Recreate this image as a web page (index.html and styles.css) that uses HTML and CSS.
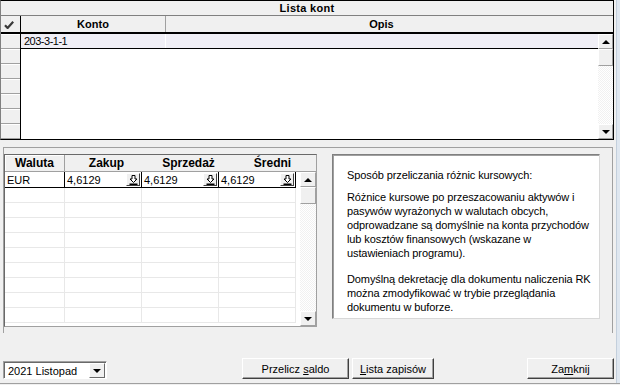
FILE: index.html
```html
<!DOCTYPE html>
<html lang="pl">
<head>
  <meta charset="UTF-8">
  <meta name="viewport" content="width=device-width, initial-scale=1.0">
  <title>Różnice kursowe</title>
  <link rel="stylesheet" href="styles.css">
</head>
<body>
  <div class="app">
    <div class="main">

      <div class="accounts">
        <div class="accounts-title">Lista kont</div>
        <div class="accounts-body">
          <div class="indicator">
            <div class="ind-head">
              <svg width="10" height="8" viewBox="0 0 10 8"><path d="M1 4.2 L3.6 7 L9.2 0.8" fill="none" stroke="#3a3a3a" stroke-width="2.2"/></svg>
            </div>
            <div class="ind-cell"></div>
            <div class="ind-cell"></div>
            <div class="ind-cell"></div>
            <div class="ind-cell"></div>
            <div class="ind-cell"></div>
            <div class="ind-cell"></div>
            <div class="ind-cell"></div>
          </div>
          <div class="acc-grid">
            <div class="acc-head">
              <div class="acc-konto">Konto</div>
              <div class="acc-opis">Opis</div>
              <div class="acc-corner"></div>
            </div>
            <div class="acc-rows">
              <div class="acc-data">
                <div class="acc-row selected">
                  <div class="acc-konto">203-3-1-1</div>
                  <div class="acc-opis"></div>
                </div>
              </div>
              <div class="vscroll">
                <div class="sb-btn"><span class="arrow-up"></span></div>
                <div class="sb-thumb"></div>
                <div class="sb-btn down"><span class="arrow-down"></span></div>
              </div>
            </div>
          </div>
        </div>
      </div>

      <div class="middle">
        <div class="cur-grid">
          <div class="cur-head">
            <div class="ch waluta">Waluta</div>
            <div class="ch kurs zakup">Zakup</div>
            <div class="ch kurs sprzedaz">Sprzedaż</div>
            <div class="ch last">Średni</div>
          </div>
          <div class="cur-body">
            <div class="cur-cols">
              <div class="cur-row edit">
                <div class="cc waluta">EUR</div>
                <div class="cc kurs">4,6129<span class="pick"><svg width="9" height="10" viewBox="0 0 9 10"><path d="M3 0.5 H6 V4 H8 L4.5 7.5 L1 4 H3 Z" fill="#fff" stroke="#000"/><rect x="0.5" y="8.5" width="8" height="1.5" fill="#000"/></svg></span></div>
                <div class="cc kurs">4,6129<span class="pick"><svg width="9" height="10" viewBox="0 0 9 10"><path d="M3 0.5 H6 V4 H8 L4.5 7.5 L1 4 H3 Z" fill="#fff" stroke="#000"/><rect x="0.5" y="8.5" width="8" height="1.5" fill="#000"/></svg></span></div>
                <div class="cc kurs">4,6129<span class="pick"><svg width="9" height="10" viewBox="0 0 9 10"><path d="M3 0.5 H6 V4 H8 L4.5 7.5 L1 4 H3 Z" fill="#fff" stroke="#000"/><rect x="0.5" y="8.5" width="8" height="1.5" fill="#000"/></svg></span></div>
              </div>
              <div class="cur-row"><div class="cc waluta"></div><div class="cc kurs"></div><div class="cc kurs"></div><div class="cc kurs"></div></div>
              <div class="cur-row"><div class="cc waluta"></div><div class="cc kurs"></div><div class="cc kurs"></div><div class="cc kurs"></div></div>
              <div class="cur-row"><div class="cc waluta"></div><div class="cc kurs"></div><div class="cc kurs"></div><div class="cc kurs"></div></div>
              <div class="cur-row"><div class="cc waluta"></div><div class="cc kurs"></div><div class="cc kurs"></div><div class="cc kurs"></div></div>
              <div class="cur-row"><div class="cc waluta"></div><div class="cc kurs"></div><div class="cc kurs"></div><div class="cc kurs"></div></div>
              <div class="cur-row"><div class="cc waluta"></div><div class="cc kurs"></div><div class="cc kurs"></div><div class="cc kurs"></div></div>
              <div class="cur-row"><div class="cc waluta"></div><div class="cc kurs"></div><div class="cc kurs"></div><div class="cc kurs"></div></div>
              <div class="cur-row"><div class="cc waluta"></div><div class="cc kurs"></div><div class="cc kurs"></div><div class="cc kurs"></div></div>
              <div class="cur-row"><div class="cc waluta"></div><div class="cc kurs"></div><div class="cc kurs"></div><div class="cc kurs"></div></div>
            </div>
            <div class="cur-gap"></div>
            <div class="vscroll wide">
              <div class="sb-btn"><span class="arrow-up"></span></div>
              <div class="sb-thumb"></div>
              <div class="sb-btn down"><span class="arrow-down"></span></div>
            </div>
          </div>
        </div>

        <div class="info">
          <p>Sposób przeliczania różnic kursowych:</p>
          <p>Różnice kursowe po przeszacowaniu aktywów i<br>
            pasywów wyrażonych w walutach obcych,<br>
            odprowadzane są domyślnie na konta przychodów<br>
            lub kosztów finansowych (wskazane w<br>
            ustawieniach programu).</p>
          <p class="last">Domyślną dekretację dla dokumentu naliczenia RK<br>
            można zmodyfikować w trybie przeglądania<br>
            dokumentu w buforze.</p>
        </div>
      </div>

      <div class="toolbar">
        <div class="combo">
          <span class="combo-text">2021 Listopad</span>
          <span class="combo-btn"><span class="arrow-down"></span></span>
        </div>
        <button class="btn przelicz">Przelicz <u>s</u>aldo</button>
        <button class="btn lista"><u>L</u>ista zapisów</button>
        <button class="btn zamknij">Za<u>m</u>knij</button>
      </div>

    </div>
    <div class="edge"></div>
  </div>
</body>
</html>
```

FILE: styles.css
```css
* {
  box-sizing: border-box;
}

body {
  margin: 0;
  width: 620px;
  height: 385px;
  overflow: hidden;
  background: #f0f0f0;
  font-family: 'Liberation Sans', Arial, sans-serif;
  font-size: 11px;
  color: #000;
}

.app {
  display: flex;
  height: 384px;
  border-bottom: 1px solid #a0a0a0;
}

.main {
  width: 614px;
  display: flex;
  flex-direction: column;
}

.edge {
  width: 4px;
  margin-left: 2px;
  border-left: 1px solid #c3cfdc;
  background: #dfe7f0;
}

/* --- Lista kont --- */

.accounts {
  width: 614px;
  height: 140px;
  border-top: 1px solid #000;
  border-left: 1px solid #808080;
  border-right: 1px solid #000;
  border-bottom: 1px solid #000;
}

.accounts-title {
  height: 15px;
  line-height: 14px;
  border-bottom: 1px solid #808080;
  text-align: center;
  font-weight: bold;
  letter-spacing: 0.3px;
}

.accounts-body {
  display: flex;
  height: 123px;
}

.indicator {
  width: 20px;
  border-right: 1px solid #000;
}

.ind-head {
  height: 18px;
  border-bottom: 2px solid #000;
  display: flex;
  justify-content: center;
  align-items: flex-end;
  padding: 0 3px 3px 0;
}

.ind-cell {
  height: 15px;
  border-bottom: 1px solid #a0a0a0;
  box-shadow: inset 0 1px #fff;
}

.acc-grid {
  flex: 1;
  display: flex;
  flex-direction: column;
}

.acc-head {
  display: flex;
  height: 18px;
  border-bottom: 2px solid #000;
  font-weight: bold;
  line-height: 16px;
  text-align: center;
}

.acc-konto {
  width: 145px;
  border-right: 1px solid #a0a0a0;
}

.acc-opis {
  width: 431px;
}

.acc-corner {
  flex: 1;
}

.acc-rows {
  display: flex;
  flex: 1;
}

.acc-data {
  flex: 1;
  background: #fff;
}

.acc-row {
  display: flex;
  height: 15px;
  line-height: 14px;
  border-bottom: 1px solid #000;
}

.acc-row.selected {
  background: #f0eff6;
}

.acc-row .acc-konto {
  border-right-color: #fff;
  padding-left: 3px;
  letter-spacing: -0.5px;
}

.acc-row .acc-opis {
  flex: 1;
}

/* --- scrollbars --- */

.vscroll {
  width: 15px;
  display: flex;
  flex-direction: column;
  background: repeating-conic-gradient(#fff 0 25%, #f1f1f1 0 50%) 0 0 / 2px 2px;
}

.vscroll.wide {
  width: 16px;
}

.sb-btn,
.sb-thumb {
  background: #f0f0f0;
  border: 1px solid;
  border-color: #fff #a0a0a0 #a0a0a0 #fff;
}

.sb-btn {
  height: 15px;
  display: flex;
  align-items: center;
  justify-content: center;
}

.sb-btn.down {
  margin-top: auto;
}

.sb-thumb {
  height: 17px;
}

.arrow-up,
.arrow-down {
  width: 0;
  height: 0;
  border-left: 4px solid transparent;
  border-right: 4px solid transparent;
}

.arrow-up {
  border-bottom: 4px solid #000;
}

.arrow-down {
  border-top: 4px solid #000;
}

/* --- middle part --- */

.middle {
  margin: 7px 0 0 3px;
  width: 610px;
  height: 186px;
  border-top: 1px solid #a0a0a0;
  border-left: 1px solid #a0a0a0;
  border-right: 1px solid #a0a0a0;
  padding-top: 6px;
  display: flex;
  align-items: flex-start;
}

.cur-grid {
  width: 313px;
  height: 173px;
  border: 1px solid;
  border-color: #696969 #a0a0a0 #a0a0a0 #696969;
  background: #fff;
  display: flex;
  flex-direction: column;
}

.cur-head {
  display: flex;
  height: 17px;
  background: #f0f0f0;
  border-bottom: 1px solid #a0a0a0;
  font-size: 12px;
  font-weight: bold;
  line-height: 16px;
  text-align: center;
}

.ch.waluta {
  border-right: 1px solid #a0a0a0;
  box-shadow: inset 1px 1px #fff;
}

.ch.zakup {
  padding-left: 6px;
}

.ch.sprzedaz {
  padding-left: 16px;
}

.ch.last {
  flex: 1;
  padding-left: 10px;
}

.waluta {
  width: 60px;
}

.kurs {
  width: 77px;
}

.cur-body {
  display: flex;
  flex: 1;
}

.cur-cols {
  width: 291px;
}

.cur-gap {
  width: 4px;
}

.cur-row {
  display: flex;
  height: 15px;
  border-bottom: 1px solid #e8e8e8;
}

.cur-row .cc {
  border-right: 1px solid #e8e8e8;
}

.cur-row.edit {
  height: 16px;
  border-bottom-color: #000;
}

.cur-row.edit .cc {
  border-right-color: #000;
  display: flex;
  align-items: center;
  justify-content: space-between;
  padding-left: 2px;
}

.pick {
  width: 14px;
  height: 13px;
  margin-right: 1px;
  background: #f0f0f0;
  border: 1px solid;
  border-color: #fff #404040 #404040 #fff;
  display: flex;
  align-items: center;
  justify-content: center;
}

.info {
  margin-left: 15px;
  width: 268px;
  height: 165px;
  background: #fff;
  border: 1px solid;
  border-color: #808080 #d8d8d8 #d8d8d8 #808080;
  box-shadow: inset 1px 1px #a0a0a0;
  padding: 13px 0 0 14px;
  line-height: 14px;
  letter-spacing: -0.1px;
  white-space: nowrap;
}

.info p {
  margin: 0 0 8px;
}

.info p.last {
  margin-top: 12px;
}

/* --- bottom bar --- */

.toolbar {
  margin-top: auto;
  margin-bottom: 4px;
  height: 21px;
  display: flex;
  align-items: flex-start;
}

.combo {
  margin: 3px 0 0 3px;
  width: 104px;
  height: 18px;
  background: #fff;
  border: 1px solid;
  border-color: #a0a0a0 #fff #fff #a0a0a0;
  box-shadow: inset 1px 1px #696969;
  display: flex;
  align-items: center;
  justify-content: space-between;
  padding: 1px 1px 0 4px;
}

.combo-btn {
  width: 16px;
  height: 15px;
  background: #f0f0f0;
  border: 1px solid;
  border-color: #fff #696969 #696969 #fff;
  display: flex;
  align-items: center;
  justify-content: center;
}

.btn {
  height: 21px;
  padding: 0;
  background: #f0f0f0;
  border: 1px solid;
  border-color: #fff #404040 #404040 #fff;
  box-shadow: inset -1px -1px #a0a0a0;
  font-family: 'Liberation Sans', Arial, sans-serif;
  font-size: 11px;
  color: #000;
}

.przelicz {
  margin-left: 135px;
  width: 107px;
}

.lista {
  margin-left: 3px;
  width: 82px;
}

.zamknij {
  margin-left: auto;
  width: 87px;
}
```
